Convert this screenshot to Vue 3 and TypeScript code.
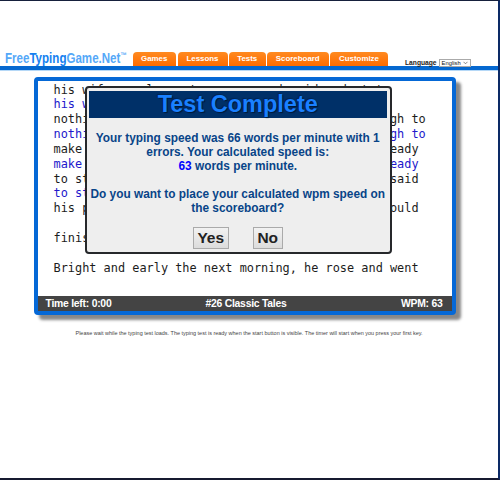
<template>
  <div class="page">
    <header class="header">
      <div class="logo"><div class="logo-text">Free<span>Typing</span>Game.Net<sup>™</sup></div></div>
      <nav class="tabs">
        <a v-for="tab in tabs" :key="tab.label" class="tab" :style="{ width: tab.width + 'px' }">{{ tab.label }}</a>
      </nav>
      <div class="language">
        <span>Language</span>
        <button class="select">
          <span>English</span>
          <svg width="5" height="4" viewBox="0 0 5 4"><path d="M0.5 0.8 L2.5 2.8 L4.5 0.8" fill="none" stroke="#555" stroke-width="0.7" /></svg>
        </button>
      </div>
    </header>

    <main class="game">
      <div class="lines">
        <div v-for="(line, i) in lines" :key="i" class="line" :class="{ typed: line.typed }">{{ line.text }}</div>
      </div>
      <footer class="status">
        <span class="time">Time left: 0:00</span>
        <span class="story">#26 Classic Tales</span>
        <span class="wpm">WPM: {{ speed }}</span>
      </footer>

      <div v-if="open" class="dialog">
        <h1>Test Complete</h1>
        <p class="result">
          Your typing speed was 66 words per minute with 1<br />
          errors. Your calculated speed is:<br />
          <b>{{ speed }}</b> words per minute.
        </p>
        <p class="question">
          Do you want to place your calculated wpm speed on<br />
          the scoreboard?
        </p>
        <div class="buttons">
          <button class="yes" @click="open = false">Yes</button>
          <button class="no" @click="open = false">No</button>
        </div>
      </div>
    </main>

    <p class="note">Please wait while the typing test loads. The typing test is ready when the start button is visible. The timer will start when you press your first key.</p>
  </div>
</template>

<script setup lang="ts">
import { ref } from "vue";

interface Line {
  text: string;
  typed?: boolean;
}

const open = ref(true);
const speed = ref(63);

const tabs = [
  { label: "Games", width: 43.5 },
  { label: "Lessons", width: 50 },
  { label: "Tests", width: 36.5 },
  { label: "Scoreboard", width: 61.5 },
  { label: "Customize", width: 58 },
];

const lines: Line[] = [
  { text: "his wife nearly went over a word said and at to" },
  { text: "his wife nearly went over a", typed: true },
  { text: "nothing in the house, and there was scarce enough to" },
  { text: "nothing in the house, and there was scarce enough to", typed: true },
  { text: "make a supper for them both, and he was quite ready" },
  { text: "make a supper for them both, and he was quite ready", typed: true },
  { text: "to start out on the roads again that night, he said" },
  { text: "to start out on the roads", typed: true },
  { text: "his poor old coat was not quite done, and she would" },
  { text: "" },
  { text: "finish it." },
  { text: "" },
  { text: "Bright and early the next morning, he rose and went" },
];
</script>

<style>
body {
  margin: 0;
  background: #fff;
}
</style>

<style scoped>
.page {
  box-sizing: border-box;
  width: 500px;
  height: 480px;
  overflow: hidden;
  border-top: 1px solid #16203c;
  border-right: 2px solid #0c2a66;
  border-bottom: 2px solid #171a30;
  background: #fff;
  font-family: "Liberation Sans", Arial, sans-serif;
}

.header {
  display: flex;
  align-items: flex-end;
  box-sizing: border-box;
  height: 69px;
  border-bottom: 4px solid #0568d0;
  box-shadow: 0 1px 0 #b5d8f7;
}

.logo {
  width: 128px;
  padding-left: 4.5px;
}

.logo-text {
  color: #55a8f8;
  font-size: 14.5px;
  font-weight: bold;
  line-height: 15px;
  white-space: nowrap;
  transform: scaleX(0.797);
  transform-origin: left;
}

.logo-text span {
  color: #1480f0;
}

.logo-text sup {
  font-size: 8px;
  line-height: 0;
  vertical-align: 5px;
}

.tabs {
  display: flex;
  gap: 1.5px;
}

.tab {
  height: 14px;
  border-radius: 4px 4px 0 0;
  background: linear-gradient(#ff8a20, #ff6c00);
  color: #fff;
  font-size: 7.9px;
  font-weight: bold;
  line-height: 14px;
  text-align: center;
}

.language {
  display: flex;
  align-items: center;
  gap: 2px;
  margin: 0 0 -1px 17px;
  color: #222;
  font-size: 6.7px;
  font-weight: bold;
  line-height: 8px;
}

.select {
  display: flex;
  align-items: center;
  justify-content: space-between;
  box-sizing: border-box;
  width: 32px;
  height: 8px;
  padding: 0 2px;
  border: 1px solid #aaa;
  background: #fff;
  color: #111;
  font: 5.8px/6px "Liberation Sans", Arial, sans-serif;
}

.game {
  position: relative;
  display: flex;
  flex-direction: column;
  justify-content: space-between;
  box-sizing: border-box;
  width: 422px;
  height: 238px;
  margin: 7px 0 0 34px;
  border: 4px solid #0568d6;
  border-radius: 4px;
  background: #fff;
  box-shadow: 5px 5px 3px #888;
}

.lines {
  padding: 1.5px 0 0 15.5px;
  color: #1c1c1c;
  font-family: "DejaVu Sans Mono", monospace;
  font-size: 11.9px;
}

.line {
  height: 14.85px;
  line-height: 14.85px;
  white-space: pre;
}

.typed {
  color: #2218cc;
}

.status {
  display: flex;
  justify-content: space-between;
  height: 15px;
  padding: 0 9.5px 0 7.5px;
  background: #444;
  color: #fff;
  font-size: 10.4px;
  font-weight: bold;
  line-height: 15px;
  letter-spacing: -0.25px;
}

.status span {
  flex: 1;
}

.story {
  padding-left: 4px;
  text-align: center;
}

.wpm {
  text-align: right;
}

.dialog {
  position: absolute;
  left: 46.5px;
  top: 5px;
  box-sizing: border-box;
  width: 307px;
  height: 168px;
  padding: 3px 3px 3px 2.5px;
  border: 2px solid #26282b;
  border-radius: 4px;
  background: #eee;
  color: #084488;
  font-size: 11.87px;
  font-weight: bold;
  line-height: 14px;
  text-align: center;
  white-space: nowrap;
}

.dialog h1 {
  height: 27px;
  margin: 0;
  background: #003068;
  color: #1a80ff;
  font-size: 23.5px;
  line-height: 26px;
  text-shadow: 1px 1px 1px #001838, -1px -1px 1px #002450;
}

.dialog p {
  margin: 13px 0 0;
}

.dialog b {
  color: #0000ff;
}

.dialog .question {
  margin-top: 14px;
}

.buttons {
  display: flex;
  justify-content: center;
  gap: 24px;
  margin-top: 12px;
}

.buttons button {
  box-sizing: border-box;
  height: 22px;
  padding: 0;
  border: 1px solid #aaa;
  background: linear-gradient(#f2f2f2, #dcdcdc);
  color: #222;
  font: bold 15.5px/20px "Liberation Sans", Arial, sans-serif;
}

.yes {
  width: 36px;
}

.no {
  width: 30px;
}

.note {
  margin: 15px 0 0;
  padding-left: 75.5px;
  color: #444;
  font-size: 5.47px;
  line-height: 7px;
  white-space: nowrap;
}
</style>
